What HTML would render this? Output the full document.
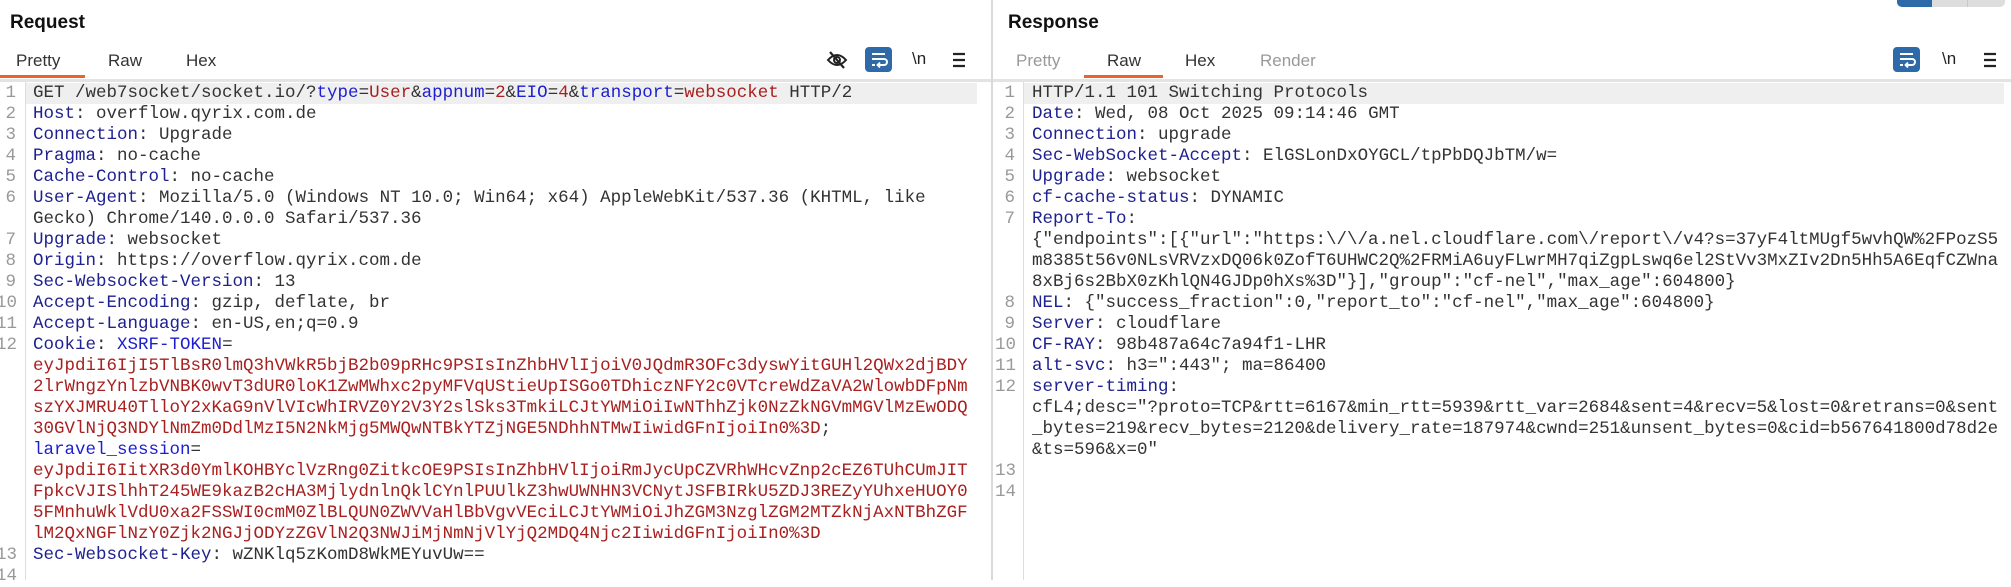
<!DOCTYPE html>
<html><head><meta charset="utf-8">
<style>
*{margin:0;padding:0;box-sizing:border-box}
body{width:2011px;height:580px;background:#fff;position:relative;overflow:hidden;font-family:"Liberation Sans",sans-serif}
.abs{position:absolute}
.title{font-weight:bold;font-size:19px;color:#111;top:12px}
.tab{font-size:17px;color:#333;top:51px}
.tab.dim{color:#999}
.ul{height:3px;background:#e8642b;top:75px}
.sep{top:79px;height:3px;background:#e3e3e3}
.code{font-family:"Liberation Mono",monospace;font-size:17.5px;white-space:pre;line-height:21px;color:#333}
.row{position:absolute;height:21px}
.ln{position:absolute;font-family:"Liberation Mono",monospace;font-size:17.5px;line-height:21px;color:#999;text-align:right;width:20px}
.n{color:#1f2190}.r{color:#a8201f}.b{color:#1c1ed0}
.hl{background:#efefef}
.wrapbtn{width:27px;height:25px;background:#2e6aa8;border-radius:4px}
</style></head><body>
<!-- divider -->
<div class="abs" style="left:991px;top:0;width:2px;height:580px;background:#d9d9d9"></div>
<div class="abs sep" style="left:0;width:991px"></div>
<div class="abs sep" style="left:993px;width:1018px"></div>
<!-- top right segmented -->
<div class="abs" style="left:1897px;top:-6px;width:108px;height:13px;background:#ddd;border-radius:5px;overflow:hidden">
<div style="position:absolute;left:0;top:0;width:35px;height:13px;background:#2e6aa8"></div>
<div style="position:absolute;left:70px;top:0;width:1px;height:13px;background:#c8c8c8"></div>
</div>
<!-- titles/tabs -->
<div class="abs title" style="left:10px">Request</div>
<div class="abs tab" style="left:16px">Pretty</div>
<div class="abs tab" style="left:108px">Raw</div>
<div class="abs tab" style="left:186px">Hex</div>
<div class="abs ul" style="left:0;width:85px"></div>
<div class="abs title" style="left:1008px">Response</div>
<div class="abs tab dim" style="left:1016px">Pretty</div>
<div class="abs tab" style="left:1107px">Raw</div>
<div class="abs tab" style="left:1185px">Hex</div>
<div class="abs tab dim" style="left:1260px">Render</div>
<div class="abs ul" style="left:1084px;width:79px"></div>
<!-- icons left -->
<svg class="abs" style="left:826px;top:50px" width="22" height="20" viewBox="0 0 22 20"><path d="M2 10 Q11 0 20 10 Q11 20 2 10Z" fill="none" stroke="#222" stroke-width="2"/><circle cx="11" cy="10" r="3" fill="none" stroke="#222" stroke-width="2"/><line x1="4" y1="2" x2="18" y2="18" stroke="#222" stroke-width="2.2"/></svg>
<div class="abs wrapbtn" style="left:865px;top:47px"><svg width="27" height="25" viewBox="0 0 27 25"><path d="M7 7h13M7 12h12a3 3 0 0 1 0 6h-5M7 18h3" fill="none" stroke="#fff" stroke-width="2"/><path d="M15 15.5l-2.5 2.5 2.5 2.5" fill="none" stroke="#fff" stroke-width="1.8"/></svg></div>
<div class="abs" style="left:912px;top:49px;font-size:17px;color:#222">\n</div>
<svg class="abs" style="left:952px;top:52px" width="14" height="16"><path d="M1 2h12M1 8h12M1 14h12" stroke="#222" stroke-width="2.2"/></svg>
<!-- icons right -->
<div class="abs wrapbtn" style="left:1893px;top:47px"><svg width="27" height="25" viewBox="0 0 27 25"><path d="M7 7h13M7 12h12a3 3 0 0 1 0 6h-5M7 18h3" fill="none" stroke="#fff" stroke-width="2"/><path d="M15 15.5l-2.5 2.5 2.5 2.5" fill="none" stroke="#fff" stroke-width="1.8"/></svg></div>
<div class="abs" style="left:1942px;top:49px;font-size:17px;color:#222">\n</div>
<svg class="abs" style="left:1983px;top:52px" width="14" height="16"><path d="M1 2h12M1 8h12M1 14h12" stroke="#222" stroke-width="2.2"/></svg>
<!-- gutters -->
<div class="abs" style="left:25px;top:82px;width:1px;height:498px;background:#ddd"></div>
<div class="abs" style="left:1023px;top:82px;width:1px;height:498px;background:#ddd"></div>
<div class="abs hl" style="left:26px;top:83px;width:951px;height:21px"></div>
<div class="abs hl" style="left:1024px;top:83px;width:980px;height:21px"></div>

<!-- left line numbers -->
<div class="abs" style="left:-4px;top:83px">
<div class="ln" style="top:0">1</div><div class="ln" style="top:21px">2</div><div class="ln" style="top:42px">3</div><div class="ln" style="top:63px">4</div><div class="ln" style="top:84px">5</div><div class="ln" style="top:105px">6</div><div class="ln" style="top:147px">7</div><div class="ln" style="top:168px">8</div><div class="ln" style="top:189px">9</div><div class="ln" style="top:210px">10</div><div class="ln" style="top:231px">11</div><div class="ln" style="top:252px">12</div><div class="ln" style="top:462px">13</div><div class="ln" style="top:483px">14</div>
</div>
<div class="abs code" style="left:33px;top:83px">GET /web7socket/socket.io/?<span class="b">type</span>=<span class="r">User</span>&amp;<span class="b">appnum</span>=<span class="r">2</span>&amp;<span class="b">EIO</span>=<span class="r">4</span>&amp;<span class="b">transport</span>=<span class="r">websocket</span> HTTP/2
<span class="n">Host</span>: overflow.qyrix.com.de
<span class="n">Connection</span>: Upgrade
<span class="n">Pragma</span>: no-cache
<span class="n">Cache-Control</span>: no-cache
<span class="n">User-Agent</span>: Mozilla/5.0 (Windows NT 10.0; Win64; x64) AppleWebKit/537.36 (KHTML, like
Gecko) Chrome/140.0.0.0 Safari/537.36
<span class="n">Upgrade</span>: websocket
<span class="n">Origin</span>: https://overflow.qyrix.com.de
<span class="n">Sec-Websocket-Version</span>: 13
<span class="n">Accept-Encoding</span>: gzip, deflate, br
<span class="n">Accept-Language</span>: en-US,en;q=0.9
<span class="n">Cookie</span>: <span class="b">XSRF-TOKEN</span>=
<span class="r">eyJpdiI6IjI5TlBsR0lmQ3hVWkR5bjB2b09pRHc9PSIsInZhbHVlIjoiV0JQdmR3OFc3dyswYitGUHl2QWx2djBDY
2lrWngzYnlzbVNBK0wvT3dUR0loK1ZwMWhxc2pyMFVqUStieUpISGo0TDhiczNFY2c0VTcreWdZaVA2WlowbDFpNm
szYXJMRU40TlloY2xKaG9nVlVIcWhIRVZ0Y2V3Y2slSks3TmkiLCJtYWMiOiIwNThhZjk0NzZkNGVmMGVlMzEwODQ
30GVlNjQ3NDYlNmZm0DdlMzI5N2NkMjg5MWQwNTBkYTZjNGE5NDhhNTMwIiwidGFnIjoiIn0%3D</span>;
<span class="b">laravel_session</span>=
<span class="r">eyJpdiI6IitXR3d0YmlKOHBYclVzRng0ZitkcOE9PSIsInZhbHVlIjoiRmJycUpCZVRhWHcvZnp2cEZ6TUhCUmJIT
FpkcVJISlhhT245WE9kazB2cHA3MjlydnlnQklCYnlPUUlkZ3hwUWNHN3VCNytJSFBIRkU5ZDJ3REZyYUhxeHUOY0
5FMnhuWklVdU0xa2FSSWI0cmM0ZlBLQUN0ZWVVaHlBbVgvVEciLCJtYWMiOiJhZGM3NzglZGM2MTZkNjAxNTBhZGF
lM2QxNGFlNzY0Zjk2NGJjODYzZGVlN2Q3NWJiMjNmNjVlYjQ2MDQ4Njc2IiwidGFnIjoiIn0%3D</span>
<span class="n">Sec-Websocket-Key</span>: wZNKlq5zKomD8WkMEYuvUw==
</div>

<!-- right line numbers -->
<div class="abs" style="left:995px;top:83px">
<div class="ln" style="top:0">1</div><div class="ln" style="top:21px">2</div><div class="ln" style="top:42px">3</div><div class="ln" style="top:63px">4</div><div class="ln" style="top:84px">5</div><div class="ln" style="top:105px">6</div><div class="ln" style="top:126px">7</div><div class="ln" style="top:210px">8</div><div class="ln" style="top:231px">9</div><div class="ln" style="top:252px">10</div><div class="ln" style="top:273px">11</div><div class="ln" style="top:294px">12</div><div class="ln" style="top:378px">13</div><div class="ln" style="top:399px">14</div>
</div>
<div class="abs code" style="left:1032px;top:83px">HTTP/1.1 101 Switching Protocols
<span class="n">Date</span>: Wed, 08 Oct 2025 09:14:46 GMT
<span class="n">Connection</span>: upgrade
<span class="n">Sec-WebSocket-Accept</span>: ElGSLonDxOYGCL/tpPbDQJbTM/w=
<span class="n">Upgrade</span>: websocket
<span class="n">cf-cache-status</span>: DYNAMIC
<span class="n">Report-To</span>:
{"endpoints":[{"url":"https:\/\/a.nel.cloudflare.com\/report\/v4?s=37yF4ltMUgf5wvhQW%2FPozS5
m8385t56v0NLsVRVzxDQ06k0ZofT6UHWC2Q%2FRMiA6uyFLwrMH7qiZgpLswq6el2StVv3MxZIv2Dn5Hh5A6EqfCZWna
8xBj6s2BbX0zKhlQN4GJDp0hXs%3D"}],"group":"cf-nel","max_age":604800}
<span class="n">NEL</span>: {"success_fraction":0,"report_to":"cf-nel","max_age":604800}
<span class="n">Server</span>: cloudflare
<span class="n">CF-RAY</span>: 98b487a64c7a94f1-LHR
<span class="n">alt-svc</span>: h3=":443"; ma=86400
<span class="n">server-timing</span>:
cfL4;desc="?proto=TCP&amp;rtt=6167&amp;min_rtt=5939&amp;rtt_var=2684&amp;sent=4&amp;recv=5&amp;lost=0&amp;retrans=0&amp;sent
_bytes=219&amp;recv_bytes=2120&amp;delivery_rate=187974&amp;cwnd=251&amp;unsent_bytes=0&amp;cid=b567641800d78d2e
&amp;ts=596&amp;x=0"
</div>
</body></html>
